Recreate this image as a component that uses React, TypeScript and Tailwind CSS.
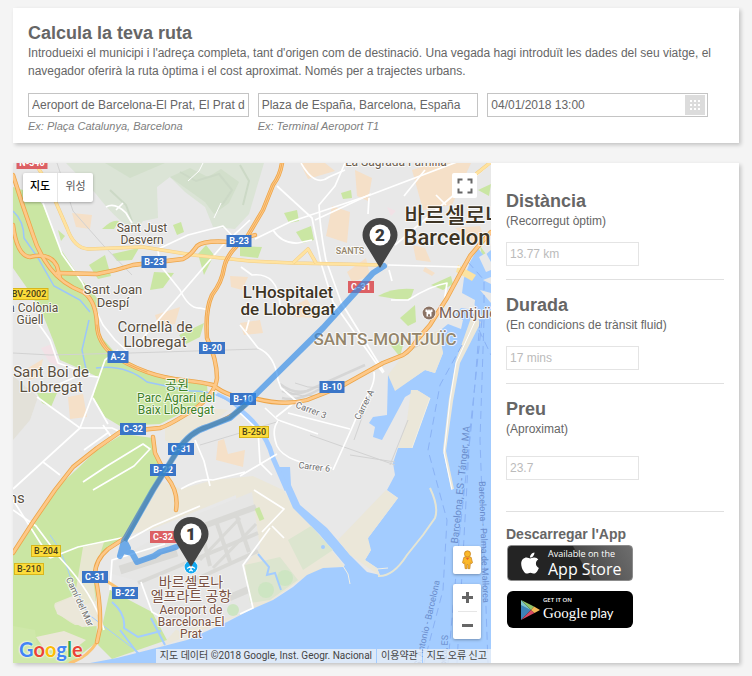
import React, { useState } from "react";
import { FaApple } from "react-icons/fa";

type ShieldKind = "blue" | "yellow" | "red";

interface Shield {
  text: string;
  x: number;
  y: number;
  w: number;
  kind: ShieldKind;
}

const SHIELD_COLORS: Record<ShieldKind, { fill: string; stroke: string; text: string }> = {
  blue: { fill: "#3a75c7", stroke: "#3a75c7", text: "#ffffff" },
  yellow: { fill: "#fcdc3b", stroke: "#d8b61c", text: "#4a4118" },
  red: { fill: "#dc6064", stroke: "#dc6064", text: "#ffffff" },
};

const SHIELDS: Shield[] = [
  { text: "N-340", x: 32, y: 163, w: 30, kind: "red" },
  { text: "B-23", x: 239, y: 241, w: 24, kind: "blue" },
  { text: "B-23", x: 154, y: 262, w: 24, kind: "blue" },
  { text: "BV-2002", x: 29, y: 294, w: 38, kind: "yellow" },
  { text: "A-2", x: 118, y: 357, w: 20, kind: "blue" },
  { text: "B-20", x: 212, y: 348, w: 25, kind: "blue" },
  { text: "B-10", x: 243, y: 399, w: 25, kind: "blue" },
  { text: "B-10", x: 332, y: 387, w: 24, kind: "blue" },
  { text: "C-32", x: 133, y: 429, w: 25, kind: "blue" },
  { text: "C-31", x: 181, y: 449, w: 25, kind: "blue" },
  { text: "B-22", x: 163, y: 470, w: 25, kind: "blue" },
  { text: "B-250", x: 254, y: 432, w: 29, kind: "yellow" },
  { text: "C-31", x: 361, y: 287, w: 25, kind: "red" },
  { text: "C-32", x: 163, y: 537, w: 25, kind: "red" },
  { text: "B-204", x: 46, y: 551, w: 29, kind: "yellow" },
  { text: "B-210", x: 29, y: 569, w: 29, kind: "yellow" },
  { text: "C-31", x: 95, y: 577, w: 25, kind: "blue" },
  { text: "B-22", x: 125, y: 593, w: 25, kind: "blue" },
];

const HIGHWAYS = [
  "M13 175 L23 206 L33 235 Q38 252 50 268 T83 292 Q96 300 97 325 C98 350 120 362 147 372 S190 379 213 385 Q230 399 257 399 Q285 406 307 400 L340 387 L383 363 L403 355 Q411 350 417 340 L430 325 L447 298 L461 272 L470 256 L481 243 L491 232",
  "M13 225 Q17 256 30 257 Q50 252 57 266 L60 278",
  "M57 273 L97 274 Q115 271 133 265 L183 259 Q190 256 197 246 Q204 240 230 242 L255 235",
  "M282 163 Q280 176 273 185 L263 210 L247 237 Q227 252 224 268 Q222 282 212 295 Q205 310 207 338 Q217 360 217 378 Q215 395 193 410 Q168 426 160 428 L120 432 L97 448 L73 467 L55 490 L33 522 L13 553",
  "M153 437 L155 453 L167 477 Q179 492 176 510",
  "M247 403 Q238 415 207 427 Q190 432 178 450 L153 490 L125 538 L108 549 Q95 560 95 575 Q101 603 100 628 L97 642",
];

const MINOR_HIGHWAYS = ["M97 642 Q88 657 70 663", "M108 582 L133 598"];

const YELLOW_ROADS = [
  "M35 163 L47 182 L67 228 Q74 248 88 249 L143 247 L193 255 L250 261 L293 263 L383 265",
  "M293 263 L308 249 L316 263",
  "M491 162 L476 174",
];

const WHITE_ROADS = [
  "M43 203 L62 254 L82 282 L103 325 L115 340 L128 352",
  "M13 489 L80 428 L93 394 L105 360 L118 350",
  "M55 386 L80 375 L98 377",
  "M37 397 L80 428 L112 428 L125 434",
  "M93 398 L108 424",
  "M43 462 L60 475 M103 425 L112 438 L124 430",
  "M36 320 L50 340 L58 363 L90 374",
  "M250 220 L222 246 L135 347",
  "M255 239 L290 222 L370 195 L470 157",
  "M315 220 L371 194",
  "M277 186 L312 218 L321 263 L333 302 L383 373",
  "M345 163 L335 186 L319 205 Q320 230 326 260 L341 302 L384 372",
  "M301 163 Q315 188 329 177 L345 170",
  "M369 198 L368 214 M273 230 Q282 244 298 243 L312 240",
  "M395 245 L455 194 L491 163 M388 265 L460 267",
  "M389 270 L392 281",
  "M391 300 L408 300 Q430 286 447 283 L444 303",
  "M436 195 L446 205 M425 170 L404 196",
  "M158 250 L160 265 L180 290 Q189 309 200 308 L209 310",
  "M156 250 L188 235 L223 226 L238 242",
  "M106 207 Q115 202 126 213 L132 223 M116 210 L123 203",
  "M240 325 L258 348 Q275 355 278 380 L281 388 L300 404",
  "M246 331 L249 320 M241 267 L252 275 Q278 272 280 305",
  "M374 372 Q376 384 363 402 L351 430 L333 470",
  "M265 408 L278 420 L318 434 M288 413 L350 429",
  "M278 421 Q271 430 277 446 Q285 463 332 468",
  "M295 402 L276 417 M240 413 L258 430 L260 463 L272 475",
  "M277 454 L240 476 M13 510 L36 526 L60 558",
  "M50 558 L78 547 L121 538 L128 540 L153 526 L200 506",
  "M60 558 Q94 594 104 630 M13 500 L50 558",
  "M110 590 L112 560 L165 544",
  "M141 582 L152 612 L167 620 M195 440 L204 461 L210 486",
  "M181 489 Q200 478 213 480 L245 472",
  "M240 614 L253 608 L243 565 L270 528 M254 490 L284 509 L262 532 M272 526 L284 538",
  "M84 450 L109 432 M83 482 L107 466 L143 444 L150 449 L134 466 L93 490",
];

const RAILWAYS = [
  "M57 163 L73 211 L103 245 L132 275",
  "M13 353 L50 355 L130 353 L260 349",
  "M295 383 Q320 394 350 380 T420 345 M285 390 Q300 400 325 393",
  "M370 395 L354 440 M350 455 L395 462 M408 420 L390 465",
  "M200 445 L280 421 M310 435 L395 465",
];

// Built-up blocks drawn in pale orange.
const BLOCKS = [
  "M72 213 L92 215 L90 229 L76 227 Z",
  "M332 206 L350 212 L347 243 L326 236 Z",
  "M355 170 L372 178 L368 201 L357 196 Z",
  "M412 170 L434 163 L471 163 L452 205 L423 210 Z",
  "M300 163 L325 163 L335 171 L308 179 Z",
  "M230 276 L248 277 L242 290 L231 287 Z",
  "M155 315 L180 307 L175 324 L158 325 Z",
  "M68 397 L83 394 L87 417 L70 419 Z",
  "M28 368 L43 359 L39 377 L29 380 Z",
  "M218 441 L224 439 L228 454 L245 450 L243 467 L216 460 Z",
  "M240 323 L260 320 L263 333 L244 335 Z",
  "M347 272 L366 258 L370 276 L352 282 Z",
  "M413 245 L425 248 L431 262 L416 260 Z",
  "M425 267 L435 273 L432 276 L423 271 Z",
  "M455 228 L480 226 L484 238 L476 245 Z",
  "M294 306 L307 299 L318 318 L295 317 Z",
];

const TREES = [
  "M173 225 L181 222 L184 232 L177 235 Z",
  "M284 213 L297 210 L299 221 L289 223 Z",
  "M296 232 L311 226 L314 240 L303 243 Z",
  "M341 193 L351 190 L352 198 L343 199 Z",
  "M102 229 Q112 219 119 221 L114 229 Z",
  "M154 272 L174 273 L163 288 L150 290 Z",
  "M198 254 L206 245 L214 255 L204 275 Z",
  "M378 296 Q393 287 414 289 L410 300 L396 299 Z",
  "M400 318 L415 305 L416 322 L408 326 Z",
  "M388 342 L404 341 L400 357 Z",
  "M431 285 L451 276 L453 284 L443 290 Z",
  "M58 230 L65 236 L61 241 Z",
  "M478 190 L491 184 L489 196 Z",
  "M480 246 L486 254 L482 256 Z",
  "M240 246 L262 247 L258 258 L240 256 Z",
];

interface MapLabelProps {
  x: number;
  y: number;
  lines: string[];
  size: number;
  lead?: number;
  color?: string;
  weight?: number;
  rotate?: number;
  halo?: boolean;
}

function MapLabel({ x, y, lines, size, lead = 12, color = "#594f3f", weight = 400, rotate = 0, halo = true }: MapLabelProps) {
  return (
    <text
      transform={`translate(${x} ${y}) rotate(${rotate})`}
      textAnchor="middle"
      fontSize={size}
      fontWeight={weight}
      fill={color}
      stroke={halo ? "#ffffff" : "none"}
      strokeWidth={halo ? 2 : 0}
      strokeOpacity={0.75}
      strokeLinejoin="round"
      paintOrder="stroke"
    >
      {lines.map((line, i) => (
        <tspan key={line} x={0} y={i * lead}>
          {line}
        </tspan>
      ))}
    </text>
  );
}

function Pin({ x, y, label }: { x: number; y: number; label: string }) {
  return (
    <g>
      <path
        d={`M${x} ${y} L${x - 14} ${y - 23} C${x - 16} ${y - 26} ${x - 17.5} ${y - 29} ${x - 17.5} ${y - 33} A17.5 17 0 0 1 ${x + 17.5} ${y - 33} C${x + 17.5} ${y - 29} ${x + 16} ${y - 26} ${x + 14} ${y - 23} Z`}
        fill="#444444"
      />
      <circle cx={x} cy={y - 33} r={10.5} fill="#ffffff" />
      <text x={x} y={y - 27} textAnchor="middle" fontSize={17} fontWeight={900} fill="#3a3a3a">
        {label}
      </text>
    </g>
  );
}

function MapCanvas() {
  return (
    <svg
      viewBox="13 163 478 500"
      preserveAspectRatio="xMidYMid slice"
      className="block h-full w-full font-[Roboto,'Noto_Sans_CJK_KR',sans-serif]"
      role="img"
      aria-label="Mapa de Barcelona"
    >
      <rect x="13" y="163" width="478" height="500" fill="#e8e8e8" />

      {/* Collserola hills */}
      <path d="M66 163 L96 194 Q120 225 137 231 L143 221 L158 218 L157 187 L170 177 L185 192 L205 207 L213 227 L235 229 L249 214 L264 163 Z" fill="#dbe4d6" />
      <path d="M105 163 L130 178 L165 163 Z M170 177 L190 168 L208 177 L221 169 L239 182 L229 203 L214 214 L205 202 Z" fill="#d2dfcb" />
      <path d="M180 172 L196 181 L219 174 L232 190 L222 205 M110 190 L126 205 L132 221 M240 165 L249 181 L243 205" fill="none" stroke="#ccd9c6" strokeWidth="2" />
      <path d="M188 181 L199 171 L203 163 M214 218 L221 203" fill="none" stroke="#ffffff" strokeWidth="1" />

      {/* beige outskirts */}
      <path d="M165 424 Q205 405 228 410 L214 422 L178 450 L165 440 Z" fill="#ebe7d9" />
      <path d="M13 376 L38 397 L30 420 L13 440 Z" fill="#e3e1d9" />
      <path d="M158 480 L181 489 L213 480 L253 476 L283 490 L345 567 L323 568 L300 580 L273 600 L240 615 L160 647 L240 560 L236 495 L150 530 L130 534 Z" fill="#ebe7d9" />

      {/* Llobregat farmland */}
      <path d="M13 187 L33 193 L43 205 L60 248 L80 278 L97 298 L98 333 L117 355 L147 372 L207 383 L208 400 L160 424 L120 426 L105 417 L93 397 L98 377 L83 370 L60 360 L53 340 L43 315 L27 288 L13 268 Z" fill="#cae6a3" />
      <path d="M123 434 L153 438 L157 455 L165 474 L125 538 L95 560 L97 642 L70 663 L13 663 L13 555 L55 490 L97 450 Z" fill="#cae6a3" />
      <path d="M110 590 L152 612 L167 640 L112 659 L98 645 Z" fill="#cae6a3" />
      <path d="M89 265 L105 255 L111 276 L98 279 Z M112 254 L139 248 L132 260 L117 261 Z M37 393 L57 393 L51 407 L42 403 Z M179 335 L204 323 L200 337 L186 344 Z" fill="#cae6a3" />
      <path d="M83 547 L104 542 L98 561 L94 585 L98 625 L75 625 Q50 611 55 603 L75 595 Z" fill="#e8e7d2" />
      <path d="M13 626 L35 630 L38 655 L82 651 L74 663 L13 663 Z" fill="#cfe8aa" />
      <path d="M75 595 L83 605 L99 600 L98 626 L82 627 L57 614 L55 605 Z M36 637 L64 631 L86 640 L72 651 L45 650 Z" fill="#ebe7d9" />

      {/* airport grounds */}
      <path d="M112 563 L128 553 L200 513 L252 492 L260 548 L244 566 L253 608 L240 614 L180 632 L152 612 L141 582 L112 574 Z" fill="#e6e6e5" />
      <g stroke="#d9d9d6" fill="none" strokeLinecap="butt">
        <path d="M120 570 L177 552" strokeWidth="9" />
        <path d="M198 528 L256 507" strokeWidth="6" />
        <path d="M138 583 L258 533" strokeWidth="4" />
        <path d="M190 582 L258 551" strokeWidth="4" />
        <path d="M216 521 L230 562 M236 514 L249 552 M202 533 L210 566" strokeWidth="4" />
        <path d="M200 560 L240 518 M213 568 L256 524" strokeWidth="3" />
        <path d="M224 600 L252 588" strokeWidth="7" />
      </g>

      <g>
        {BLOCKS.map((d) => (
          <path key={d} d={d} fill="#f5e0c8" />
        ))}
        {TREES.map((d) => (
          <path key={d} d={d} fill="#cae6a3" />
        ))}
      </g>
      <path d="M41 348 L52 344 L60 367 L49 362 Z M387 207 L396 211 L391 216 Z" fill="#f2e1e6" />

      {/* sea and harbour */}
      <path
        d="M90 663 L117 658 L160 647 L187 640 L227 622 L250 610 L273 600 L293 587 L307 575 L323 568 L343 567 L345 565 L320 535 L293 508 L283 485 L277 467 L290 467 L291 485 L300 505 L327 528 L350 555 L367 572 L380 575 L377 568 L365 560 L371 550 L363 541 L368 538 L398 498 L387 490 L395 475 L393 463 L398 448 L412 448 L430 398 L417 390 L405 397 L382 440 L373 437 L375 427 L369 423 L373 417 L387 415 L388 375 L395 378 L395 390 L425 370 L435 373 L443 353 L437 333 L448 324 L461 329 L463 320 L455 315 L461 308 L474 310 L475 300 L462 293 L464 278 L470 262 L478 248 L484 256 L491 250 L491 663 Z"
        fill="#a3ccff"
      />
      <path d="M388 375 L415 340 L439 330 L443 353 L435 373 L425 370 L395 391 Z" fill="#ebe7d9" />
      <path d="M411 390 L417 390 L430 398 L412 448 L398 448 L407 420 Z" fill="#ebe7d9" />
      <path d="M398 498 L368 538 L371 550 L365 560 L377 568 L380 576 L350 555 L338 540 L386 490 Z" fill="#ebe7d9" />
      <path d="M240 410 Q266 430 273 458 L287 490" stroke="#a3ccff" strokeWidth="5" fill="none" />
      <path d="M217 394 Q238 403 245 416" stroke="#a3ccff" strokeWidth="3" fill="none" />
      <g fill="#e8e8e8">
        <path d="M479 257 L486 253 L491 262 L491 270 L486 272 Z M483 280 L491 277 L491 284 Z" />
        <path d="M464 299 L469 297 L483 318 L477 320 Z M480 290 L491 293 L491 303 Z" />
      </g>
      <path d="M458 265 L476 275 L472 281 L456 272 Z" fill="#fbe3a2" />
      <path d="M472 315 L456 360 L449 399 L443 450 L451 489 L454 489 L446 451 L453 401 L460 363 L481 322 Z" fill="#ebe7d9" />
      <path d="M476 319 L456 363 L450 400 L444 453 L452 490" stroke="#ffffff" strokeWidth="1" fill="none" />
      <path d="M378 576 Q393 577 407 555 L423 535 L435 518 Q439 507 430 488" stroke="#e5e5d4" strokeWidth="2" fill="none" />
      <path d="M343 566 L348 574 L350 584 M377 569 L388 568 M412 448 L430 398" stroke="#f1efe4" strokeWidth="1" fill="none" />
      <path d="M288 540 L311 526 L333 550 L303 570 Z M245 565 L280 557 L298 580 L270 600 L250 603 Z" fill="#dce5cf" />
      <g fill="#cde5c2">
        <circle cx="285" cy="578" r="8" />
        <circle cx="266" cy="590" r="8" />
        <circle cx="233" cy="610" r="6" />
      </g>
      <path d="M258 554 L269 567 L267 575 L275 573 L281 590 M112 602 Q126 614 124 628 L138 637 L161 631 M151 618 L165 645 M120 630 L139 655" stroke="#a3ccff" strokeWidth="2" fill="none" />
      <circle cx="323" cy="547" r="2" fill="#a3ccff" />
      <path d="M257 508 L262 520" stroke="#cae6a3" strokeWidth="5" fill="none" />
      <path d="M13 211 Q24 221 24 238 L38 258 L54 286 L67 293 L80 300 L90 312 M89 320 L82 350 L86 369 M96 368 Q125 364 147 382 L190 391 Q220 390 240 410" stroke="#9cc6fa" strokeWidth="1.5" fill="none" />
      <path d="M50 535 Q62 550 71 579 L88 614 L139 653" stroke="#a3ccff" strokeWidth="1" fill="none" />

      {/* ferry lines */}
      <g fill="none" stroke="#8ab2f5" strokeWidth="1" strokeDasharray="8 5">
        <path d="M462 345 L440 385 L428 450 L447 520 L443 590 L424 663" />
        <path d="M480 320 L472 420 L460 530 L448 663" />
        <path d="M484 320 L480 440 L488 663" />
        <path d="M482 320 L470 430 L457 663" />
        <path d="M479 330 L491 355 M468 262 L484 280 L484 320" />
      </g>

      {/* marshalling yard */}
      <path d="M280 384 Q292 394 307 391 L365 365 M282 391 Q295 398 314 388 M282 398 Q298 402 320 389" stroke="#d6d6d6" strokeWidth="2.5" fill="none" />
      {RAILWAYS.map((d) => (
        <path key={d} d={d} fill="none" stroke="#d2d2d2" strokeWidth="1" />
      ))}
      {WHITE_ROADS.map((d) => (
        <path key={d} d={d} fill="none" stroke="#ffffff" strokeWidth="1.7" strokeLinejoin="round" />
      ))}

      {YELLOW_ROADS.map((d) => (
        <g key={d} fill="none" strokeLinejoin="round">
          <path d={d} stroke="#f3cd84" strokeWidth="3.6" />
          <path d={d} stroke="#ffe3a0" strokeWidth="2.6" />
        </g>
      ))}
      <g fill="none" strokeLinejoin="round" strokeLinecap="round">
        {MINOR_HIGHWAYS.map((d) => (
          <path key={d} d={d} stroke="#fbc373" strokeWidth="3" />
        ))}
        {HIGHWAYS.map((d) => (
          <path key={d} d={d} stroke="#eda548" strokeWidth="4.4" />
        ))}
        {HIGHWAYS.map((d) => (
          <path key={d} d={d} stroke="#fdc888" strokeWidth="2.8" />
        ))}
        <path d="M97 325 C98 350 120 362 147 372 M282 163 Q280 176 273 185 L263 210 L247 237 Q227 252 224 268 Q222 282 212 295 Q205 310 207 338" stroke="#eda548" strokeWidth="0.8" />
      </g>

      {SHIELDS.map((s) => (
        <g key={`${s.text}-${s.x}`}>
          <rect x={s.x - s.w / 2} y={s.y - 5.5} width={s.w} height={11} fill={SHIELD_COLORS[s.kind].fill} stroke={SHIELD_COLORS[s.kind].stroke} strokeWidth="1" />
          <text x={s.x} y={s.y + 3} textAnchor="middle" fontSize={9} fontWeight={s.kind === "yellow" ? 500 : 700} fill={SHIELD_COLORS[s.kind].text}>
            {s.text}
          </text>
        </g>
      ))}

      <MapLabel x={142} y={232} lines={["Sant Just", "Desvern"]} size={12} />
      <MapLabel x={113} y={294} lines={["Sant Joan", "Despí"]} size={13} lead={13} />
      <MapLabel x={30} y={312} lines={["La Colònia", "Güell"]} size={12} />
      <MapLabel x={155} y={332} lines={["Cornellà de", "Llobregat"]} size={15} lead={15} />
      <MapLabel x={51} y={377} lines={["Sant Boi de", "Llobregat"]} size={15} lead={15} />
      <MapLabel x={-12} y={503} lines={["Viladecans"]} size={15} />
      <MapLabel x={288} y={298} lines={["L'Hospitalet", "de Llobregat"]} size={17} lead={17} weight={500} color="#3d3424" />
      <MapLabel x={350} y={254} lines={["SANTS"]} size={9} color="#94856b" weight={500} />
      <MapLabel x={385} y={345} lines={["SANTS-MONTJUÏC"]} size={17} color="#94856b" weight={500} />
      <MapLabel x={396} y={166} lines={["La Sagrada Familia"]} size={12} color="#6b5d4d" />
      <MapLabel x={455} y={223} lines={["바르셀로나"]} size={22} color="#3d3424" weight={500} />
      <MapLabel x={453} y={245} lines={["Barcelona"]} size={22} color="#3d3424" weight={500} />
      <MapLabel x={468} y={318} lines={["Montjuïc"]} size={15} color="#7a6155" />
      <MapLabel x={177} y={389} lines={["공원"]} size={13} color="#3e8127" />
      <MapLabel x={176} y={402} lines={["Parc Agrari del", "Baix Llobregat"]} size={12} color="#3e8127" />
      <MapLabel x={191} y={587} lines={["바르셀로나", "엘프라트 공항"]} size={14} lead={14} color="#7a5244" />
      <MapLabel x={191} y={614} lines={["Aeroport de", "Barcelona-El", "Prat"]} size={12} color="#7a5244" />
      <MapLabel x={310} y={413} lines={["Carrer 3"]} size={9} rotate={21} color="#6d6d6d" />
      <MapLabel x={314} y={470} lines={["Carrer 6"]} size={9} rotate={7} color="#6d6d6d" />
      <MapLabel x={367} y={406} lines={["Carrer A"]} size={9} rotate={-63} color="#6d6d6d" />
      <MapLabel x={77} y={603} lines={["Camí del Mar"]} size={9} rotate={65} color="#6d6d6d" />
      <MapLabel x={464} y={485} lines={["Barcelona, ES - Tánger, MA"]} size={10} rotate={-84} color="#6a8ccc" halo={false} />
      <MapLabel x={481} y={542} lines={["Barcelona - Palma de Mallorca"]} size={9} rotate={88} color="#6a8ccc" halo={false} />
      <MapLabel x={430} y={624} lines={["S. Antonio - Barcelona"]} size={9} rotate={-77} color="#6a8ccc" halo={false} />
      <MapLabel x={447} y={652} lines={["Ibiza, ES"]} size={9} rotate={-86} color="#6a8ccc" halo={false} />

      <g>
        <circle cx="429" cy="313" r="7" fill="#ffffff" />
        <circle cx="429" cy="313" r="6.4" fill="#8b7364" />
        <path d="M425.5 309.5 h2 v1 h0.8 v-1 h1.4 v1 h0.8 v-1 h2 v2.5 h-1 v4.5 h-5 v-4.5 h-1 z" fill="#ffffff" />
        <path d="M428 316.5 v-2 q1 -1.4 2 0 v2 z" fill="#8b7364" />
      </g>

      {/* calculated route */}
      <path
        d="M176 547 L170 549 L160 552 L154 556 L137 562 L132 553 L124 551 L128 548 L126 544 L120 556 L124 541 L153 490 L178 450 Q190 432 207 427 L230 418 L247 403 L323 328 L373 273 L384 266"
        fill="none"
        stroke="#2f8ae8"
        strokeWidth="6"
        strokeOpacity="0.66"
        strokeLinecap="round"
        strokeLinejoin="round"
      />
      <path d="M125 541 L153 490 L178 450 Q190 432 207 427 L230 418 L246 404" fill="none" stroke="#3f83b5" strokeWidth="4" strokeOpacity="0.6" />

      <circle cx="191" cy="567" r="7" fill="#ffffff" />
      <circle cx="191" cy="567" r="6.4" fill="#12a8f0" />
      <path d="M187 568.5 L191 566 L195 568.5 M189.3 571.2 L191 569.5 L192.7 571.2 M191 565 V570" stroke="#ffffff" strokeWidth="1.3" fill="none" />

      <Pin x={191} y={567} label="1" />
      <Pin x={380} y={268} label="2" />
    </svg>
  );
}

function GoogleWordmark() {
  return (
    <span className="absolute bottom-[2px] left-[6px] font-[Lato,sans-serif] text-[20px] leading-6 font-bold [text-shadow:0_0_2px_#fff,0_0_2px_#fff]">
      <span className="text-[#4285f4]">G</span>
      <span className="text-[#ea4335]">o</span>
      <span className="text-[#fbbc05]">o</span>
      <span className="text-[#4285f4]">g</span>
      <span className="text-[#34a853]">l</span>
      <span className="text-[#ea4335]">e</span>
    </span>
  );
}

function Pegman() {
  return (
    <svg viewBox="0 0 14 22" className="h-5 w-[13px]" aria-hidden="true">
      <path d="M3 8 Q7 6 11 8 L12.5 14 L11 15 L10.2 14 L9.6 20.5 H7.5 V16 H6.5 V20.5 H4.4 L3.8 14 L3 15 L1.5 14 Z" fill="#fbb829" stroke="#c78323" strokeWidth="0.8" />
      <circle cx="7" cy="4.3" r="3.4" fill="#fbb829" stroke="#c78323" strokeWidth="0.8" />
      <path d="M4 4 A3.2 3.2 0 0 1 10 4 L9 2 H5 Z" fill="#d89422" />
      <path d="M5 8.4 L7 11 L9 8.4 Z" fill="#e8602c" />
    </svg>
  );
}

function RouteMap() {
  const [view, setView] = useState<"map" | "satellite">("map");

  return (
    <div className="relative h-[500px] min-w-0 flex-1 overflow-hidden font-[Roboto,'Noto_Sans_CJK_KR',sans-serif]">
      <MapCanvas />

      <div className="absolute top-[10px] left-[10px] flex h-[29px] rounded-xs bg-white text-[11px] shadow-[0_1px_3px_rgba(0,0,0,0.3)]">
        <button type="button" onClick={() => setView("map")} className={view === "map" ? "w-[35px] border-r border-[#e6e6e6] font-medium text-black" : "w-[35px] border-r border-[#e6e6e6] text-[#565656]"}>
          지도
        </button>
        <button type="button" onClick={() => setView("satellite")} className={view === "satellite" ? "w-[35px] font-medium text-black" : "w-[35px] text-[#565656]"}>
          위성
        </button>
      </div>

      <button type="button" aria-label="Pantalla completa" className="absolute top-[10px] right-[14px] flex size-[25px] items-center justify-center rounded-xs bg-white">
        <svg viewBox="0 0 16 16" className="size-4" fill="none" stroke="#666666" strokeWidth="2" aria-hidden="true">
          <path d="M1.5 5.5 V1.5 H5.5 M10.5 1.5 H14.5 V5.5 M14.5 10.5 V14.5 H10.5 M5.5 14.5 H1.5 V10.5" />
        </svg>
      </button>

      <div className="absolute right-[10px] bottom-6 flex w-7 flex-col gap-[10px]">
        <button type="button" aria-label="Street View" className="flex h-7 items-center justify-center rounded-xs bg-white shadow-[0_1px_3px_rgba(0,0,0,0.3)]">
          <Pegman />
        </button>
        <div className="flex flex-col items-center rounded-xs bg-white shadow-[0_1px_3px_rgba(0,0,0,0.3)]">
          <button type="button" aria-label="Apropa" className="flex h-[27px] w-full items-center justify-center">
            <svg viewBox="0 0 11 11" className="size-[11px]" aria-hidden="true">
              <path d="M4 0 H7 V4 H11 V7 H7 V11 H4 V7 H0 V4 H4 Z" fill="#666666" />
            </svg>
          </button>
          <span className="h-px w-[19px] bg-[#e6e6e6]" />
          <button type="button" aria-label="Allunya" className="flex h-[27px] w-full items-center justify-center">
            <svg viewBox="0 0 11 11" className="size-[11px]" aria-hidden="true">
              <path d="M0 4 H11 V7 H0 Z" fill="#666666" />
            </svg>
          </button>
        </div>
      </div>

      <GoogleWordmark />

      <div className="absolute right-0 bottom-0 flex h-[14px] text-[10px] leading-[14px] whitespace-nowrap text-[#444444]">
        <span className="bg-[#f5f5f5]/70 px-1">지도 데이터 ©2018 Google, Inst. Geogr. Nacional</span>
        <a href="#terms" className="ml-px bg-[#f5f5f5]/70 px-1">
          이용약관
        </a>
        <a href="#report" className="ml-px bg-[#f5f5f5]/70 px-1">
          지도 오류 신고
        </a>
      </div>
    </div>
  );
}

interface ResultProps {
  id: string;
  title: string;
  note: string;
  value: string;
  spacing: string;
}

function Result({ id, title, note, value, spacing }: ResultProps) {
  return (
    <div className="border-b border-[#e0e0e0]">
      <label htmlFor={id} className="block">
        <span className="block text-lg leading-5 font-bold">{title}</span>
        <span className="block leading-5">{note}</span>
      </label>
      <div className={spacing}>
        <input id={id} value={value} disabled className="block h-6 w-[133px] border border-[#e4e4e4] bg-white px-[3px] text-xs text-[#bbbbbb]" />
      </div>
    </div>
  );
}

function AppStoreBadge() {
  return (
    <a
      href="#app-store"
      className="flex h-9 w-[126px] items-center gap-[6px] overflow-hidden rounded-[4px] border border-[#8c8c8c] bg-[linear-gradient(62deg,#242424_58%,#4a4a4a_59%,#6e6e6e)] pl-[10px] font-['Open_Sans',sans-serif] text-white"
    >
      <FaApple className="size-6 shrink-0" />
      <span className="flex flex-col whitespace-nowrap">
        <span className="text-[9px] leading-3">Available on the</span>
        <span className="text-[16px] leading-[18px]">App Store</span>
      </span>
    </a>
  );
}

function GooglePlayBadge() {
  return (
    <a href="#google-play" className="flex h-[37px] w-[126px] items-center gap-[3px] rounded-[6px] bg-black pl-[13px] text-white">
      <svg viewBox="0 0 20 22" className="h-[22px] w-5 shrink-0" aria-hidden="true">
        <path d="M1 1 L1 11 L11 11 Z" fill="#7cc4c8" />
        <path d="M1 1 L14 7.5 L11 11 Z" fill="#8fc46a" />
        <path d="M1 6 L11 11 L1 21 Z" fill="#3c83b8" />
        <path d="M1 21 L11 11 L14.5 14 Z" fill="#d94a63" />
        <path d="M14 7.5 L20 11 L14.5 14 L11 11 Z" fill="#f3b956" />
      </svg>
      <span className="flex flex-col whitespace-nowrap">
        <span className="font-['Open_Sans',sans-serif] text-[6px] leading-[7px] font-semibold">GET IT ON</span>
        <span className="flex items-baseline gap-[3px] leading-[18px]">
          <span className="font-['Liberation_Serif',serif] text-[15px]">Google</span>
          <span className="font-[Lato,sans-serif] text-[13px]">play</span>
        </span>
      </span>
    </a>
  );
}

const FIELD = "block h-6 w-full border border-[#c4c4c4] bg-white px-[3px] text-xs text-[#666666] outline-none";

export default function App() {
  const [origin, setOrigin] = useState("Aeroport de Barcelona-El Prat, El Prat de Llobregat");
  const [destination, setDestination] = useState("Plaza de España, Barcelona, España");
  const [date, setDate] = useState("04/01/2018 13:00");

  return (
    <main className="flex min-h-screen flex-col gap-5 bg-[#f4f4f4] px-[13px] pt-2 pb-[13px] font-['Liberation_Sans',Arial,sans-serif] text-xs text-[#666666]">
      <form className="bg-white px-[15px] pt-[15px] pb-[9px] shadow-[2px_2px_4px_rgba(0,0,0,0.2)]" onSubmit={(e) => e.preventDefault()}>
        <h1 className="text-lg leading-5 font-bold">Calcula la teva ruta</h1>
        <p className="mt-px leading-[18px]">
          Introdueixi el municipi i l'adreça completa, tant d'origen com de destinació. Una vegada hagi introduït les dades del seu viatge, el navegador oferirà la ruta òptima i el cost aproximat. Només per a trajectes urbans.
        </p>
        <div className="mt-[13px] mr-4 grid grid-cols-3 gap-[9px]">
          <div>
            <input id="origin" aria-label="Origen" aria-describedby="origin-hint" value={origin} onChange={(e) => setOrigin(e.target.value)} className={FIELD} />
            <p id="origin-hint" className="mt-px text-[11px] leading-4 text-[#808080] italic">
              Ex: Plaça Catalunya, Barcelona
            </p>
          </div>
          <div>
            <input id="destination" aria-label="Destinació" aria-describedby="destination-hint" value={destination} onChange={(e) => setDestination(e.target.value)} className={FIELD} />
            <p id="destination-hint" className="mt-px text-[11px] leading-4 text-[#808080] italic">
              Ex: Terminal Aeroport T1
            </p>
          </div>
          <div className="flex h-6 items-center border border-[#c4c4c4] pr-[2px]">
            <input id="date" aria-label="Data i hora" value={date} onChange={(e) => setDate(e.target.value)} className="min-w-0 flex-1 px-[3px] text-xs outline-none" />
            <button type="button" aria-label="Obre el calendari" className="flex size-5 items-center justify-center bg-[#dcdcdc]">
              <svg viewBox="0 0 10 10" className="size-[10px]" fill="#ffffff" aria-hidden="true">
                {[0, 4, 8].map((y) => [0, 4, 8].map((x) => <rect key={`${x}-${y}`} x={x} y={y} width="2" height="2" />))}
              </svg>
            </button>
          </div>
        </div>
      </form>

      <section className="flex bg-white shadow-[2px_2px_4px_rgba(0,0,0,0.2)]">
        <RouteMap />
        <aside className="flex w-[248px] shrink-0 flex-col gap-[15px] px-[15px] pt-7">
          <Result id="distance" title="Distància" note="(Recorregut òptim)" value="13.77 km" spacing="pt-[11px] pb-[13px]" />
          <Result id="duration" title="Durada" note="(En condicions de trànsit fluid)" value="17 mins" spacing="pt-[11px] pb-[13px]" />
          <Result id="price" title="Preu" note="(Aproximat)" value="23.7" spacing="pt-[17px] pb-[31px]" />
          <div className="-mt-[3px]">
            <h2 className="text-sm leading-5 font-bold">Descarregar l'App</h2>
            <div className="mt-px ml-px flex flex-col gap-[10px]">
              <AppStoreBadge />
              <GooglePlayBadge />
            </div>
          </div>
        </aside>
      </section>
    </main>
  );
}
